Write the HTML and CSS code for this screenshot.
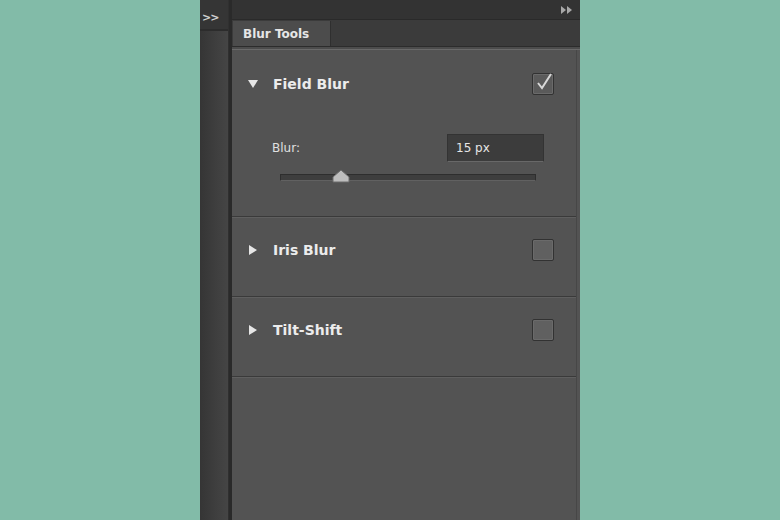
FILE: index.html
```html
<!DOCTYPE html>
<html>
<head>
<meta charset="utf-8">
<link rel="stylesheet" href="styles.css">
</head>
<body>
<div class="app">
  <div class="strip">
    <div class="strip-top"><span class="chev">&gt;&gt;</span></div>
    <div class="strip-body"></div>
  </div>
  <div class="sep"></div>
  <div class="panel">
    <div class="head">
      <svg class="ff" width="12" height="8" viewBox="0 0 12 8"><path d="M0 0 L5 4 L0 8Z M6 0 L11 4 L6 8Z" fill="#a8a8a8"/></svg>
    </div>
    <div class="tabs">
      <div class="tab">Blur Tools</div>
    </div>
    <div class="tabline"></div>
    <div class="content">
      <div class="section open">
        <div class="row">
          <svg class="tri" width="10" height="8" viewBox="0 0 10 8"><path d="M0 0 H10 L5 8Z" fill="#e6e6e6"/></svg>
          <span class="title">Field Blur</span>
          <span class="box checked">
            <svg width="20" height="20" viewBox="0 0 20 20"><path d="M4 11 L8 16 L17 2" fill="none" stroke="#d8d8d8" stroke-width="2"/></svg>
          </span>
        </div>
        <div class="param">
          <span class="label">Blur:</span>
          <span class="input">15 px</span>
        </div>
        <div class="slider">
          <div class="track"></div>
          <svg class="thumb" width="18" height="14" viewBox="0 0 18 14"><path d="M1 13 V8 L9 1 L17 8 V13Z" fill="#bdbdbd" stroke="#6a6a6a" stroke-width="1"/></svg>
        </div>
      </div>
      <div class="section">
        <div class="row">
          <svg class="tri r" width="10" height="10" viewBox="0 0 10 10"><path d="M1 0 L9 5 L1 10Z" fill="#e6e6e6"/></svg>
          <span class="title">Iris Blur</span>
          <span class="box"></span>
        </div>
      </div>
      <div class="section">
        <div class="row">
          <svg class="tri r" width="10" height="10" viewBox="0 0 10 10"><path d="M1 0 L9 5 L1 10Z" fill="#e6e6e6"/></svg>
          <span class="title">Tilt-Shift</span>
          <span class="box"></span>
        </div>
      </div>
      <div class="rest"></div>
    </div>
  </div>
</div>
</body>
</html>
```
FILE: styles.css
```css
html, body {
  margin: 0;
  padding: 0;
  background: #82bba8;
  height: 520px;
  overflow: hidden;
}
.app {
  margin-left: 200px;
  width: 380px;
  height: 520px;
  display: flex;
  font-family: "DejaVu Sans", Verdana, sans-serif;
}
.strip {
  width: 28px;
  display: flex;
  flex-direction: column;
  background: linear-gradient(to right, #353535, #3f3f3f 60%, #454545);
}
.strip-top {
  height: 31px;
  border-bottom: 2px solid #2c2c2c;
  background: #353535;
  box-sizing: border-box;
  padding: 6px 0 0 2px;
}
.chev {
  color: #d0d0d0;
  font-size: 11px;
  font-weight: bold;
  letter-spacing: -1px;
}
.strip-body { flex: 1; }
.sep {
  width: 4px;
  background: #2a2a2a;
  border-left: 1px solid #303030;
  box-sizing: border-box;
}
.panel {
  width: 348px;
  display: flex;
  flex-direction: column;
  background: #535353;
}
.head {
  height: 20px;
  background: #333333;
  border-bottom: 1px solid #2a2a2a;
  box-sizing: border-box;
  display: flex;
  justify-content: flex-end;
  align-items: center;
  padding-right: 7px;
}
.tabs {
  height: 26px;
  background: #3b3b3b;
  display: flex;
  align-items: flex-end;
  padding-left: 1px;
}
.tab {
  width: 98px;
  height: 25px;
  box-sizing: border-box;
  background: #4c4c4c;
  border-right: 1px solid #2f2f2f;
  color: #e6e6e6;
  font-size: 12px;
  font-weight: bold;
  padding: 6px 0 0 10px;
}
.tabline {
  height: 4px;
  background: #4c4c4c;
  border-top: 1px solid #2c2c2c;
  border-bottom: 1px solid #6a6a6a;
  box-sizing: border-box;
}
.content {
  flex: 1;
  display: flex;
  flex-direction: column;
  margin-right: 3px;
  border-right: 1px solid #474747;
}
.section {
  height: 77px;
  border-bottom: 1px solid #3a3a3a;
  box-shadow: 0 1px 0 #5f5f5f;
  margin-bottom: 2px;
}
.section.open { height: 166px; }
.row {
  height: 62px;
  display: flex;
  align-items: center;
  padding-left: 16px;
  padding-right: 22px;
}
.section.open .row { height: 68px; }
.tri { margin-right: 15px; }
.title {
  flex: 1;
  color: #ececec;
  font-size: 14px;
  font-weight: bold;
}
.box {
  width: 20px;
  height: 20px;
  border: 1px solid #323232;
  border-radius: 2px;
  background: #606060;
  box-shadow: inset 0 0 0 1px #6a6a6a;
  position: relative;
}
.box.checked { background: #5a5a5a; }
.box svg { position: absolute; left: 1px; top: -2px; }
.param {
  display: flex;
  align-items: center;
  padding-left: 40px;
  padding-right: 32px;
  margin-top: 16px;
}
.label {
  flex: 1;
  color: #e0e0e0;
  font-size: 12px;
}
.input {
  width: 97px;
  height: 28px;
  box-sizing: border-box;
  background: #3c3c3c;
  border: 1px solid #333;
  border-bottom: 1px solid #686868;
  color: #e6e6e6;
  font-size: 12px;
  padding: 6px 0 0 8px;
}
.slider {
  position: relative;
  margin: 7px 0 0 48px;
  width: 256px;
  height: 14px;
}
.track {
  position: absolute;
  left: 0; right: 0; top: 5px;
  height: 7px;
  background: #3e3e3e;
  border: 1px solid #2e2e2e;
  border-bottom-color: #616161;
  box-sizing: border-box;
}
.thumb { position: absolute; left: 52px; top: 0; }
.rest { flex: 1; }
```
